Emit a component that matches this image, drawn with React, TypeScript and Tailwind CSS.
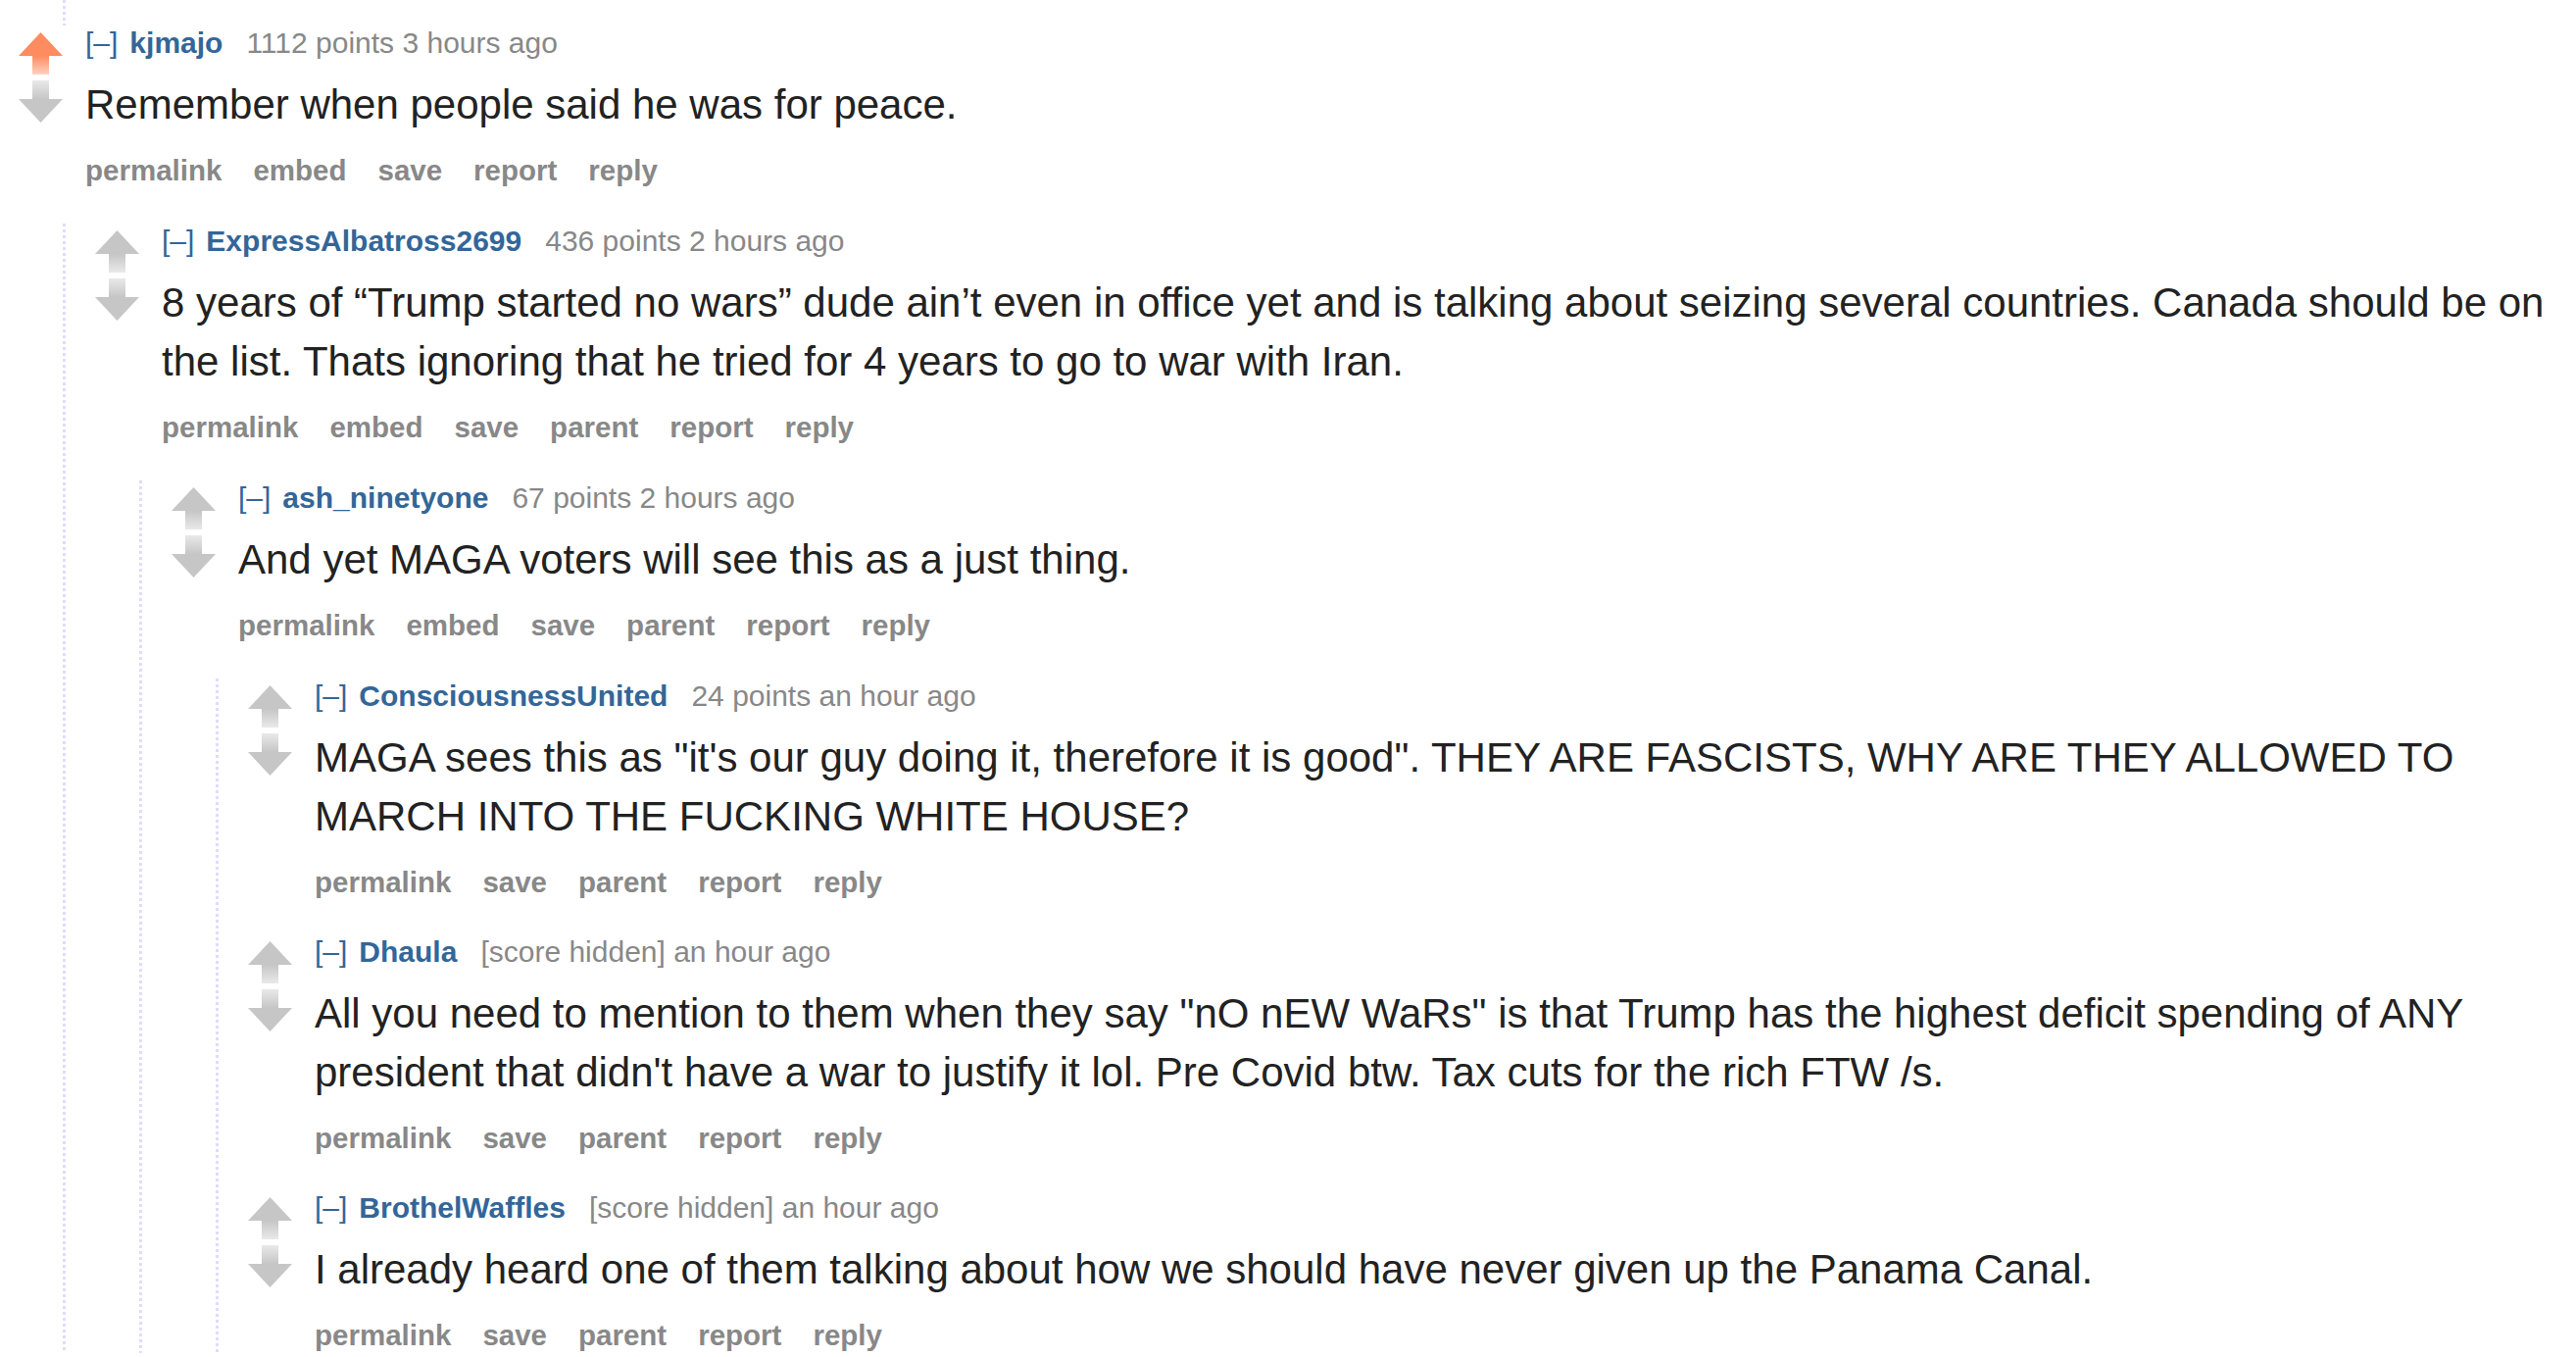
import React from 'react';

interface Comment {
  id: string;
  author: string;
  score: string;
  time: string;
  body: string;
  upvoted?: boolean;
  buttons: string[];
  children?: Comment[];
}

const full = ['permalink', 'embed', 'save', 'parent', 'report', 'reply'];
const short = ['permalink', 'save', 'parent', 'report', 'reply'];

const thread: Comment = {
  id: 'c1',
  author: 'kjmajo',
  score: '1112 points',
  time: '3 hours ago',
  body: 'Remember when people said he was for peace.',
  upvoted: true,
  buttons: ['permalink', 'embed', 'save', 'report', 'reply'],
  children: [
    {
      id: 'c2',
      author: 'ExpressAlbatross2699',
      score: '436 points',
      time: '2 hours ago',
      body: '8 years of \u201cTrump started no wars\u201d dude ain\u2019t even in office yet and is talking about seizing several countries. Canada should be on the list. Thats ignoring that he tried for 4 years to go to war with Iran.',
      buttons: full,
      children: [
        {
          id: 'c3',
          author: 'ash_ninetyone',
          score: '67 points',
          time: '2 hours ago',
          body: 'And yet MAGA voters will see this as a just thing.',
          buttons: full,
          children: [
            {
              id: 'c4',
              author: 'ConsciousnessUnited',
              score: '24 points',
              time: 'an hour ago',
              body: 'MAGA sees this as "it\'s our guy doing it, therefore it is good". THEY ARE FASCISTS, WHY ARE THEY ALLOWED TO MARCH INTO THE FUCKING WHITE HOUSE?',
              buttons: short,
            },
            {
              id: 'c5',
              author: 'Dhaula',
              score: '[score hidden]',
              time: 'an hour ago',
              body: 'All you need to mention to them when they say "nO nEW WaRs" is that Trump has the highest deficit spending of ANY president that didn\'t have a war to justify it lol. Pre Covid btw. Tax cuts for the rich FTW /s.',
              buttons: short,
            },
            {
              id: 'c6',
              author: 'BrothelWaffles',
              score: '[score hidden]',
              time: 'an hour ago',
              body: 'I already heard one of them talking about how we should have never given up the Panama Canal.',
              buttons: short,
            },
          ],
        },
      ],
    },
  ],
};

function Arrow({ dir, active, id }: { dir: 'up' | 'down'; active?: boolean; id: string }) {
  const color = active ? '#ff8b60' : '#c6c6c6';
  const light = active ? '#ffd2c0' : '#e9e9e9';
  const gid = `g-${id}-${dir}`;
  return (
    <svg width="45" height="43" viewBox="0 0 45 43" className="block">
      <defs>
        <linearGradient id={gid} x1="0" y1="0" x2="0" y2="1">
          <stop offset="0" stopColor={dir === 'up' ? color : light} />
          <stop offset="1" stopColor={dir === 'up' ? light : color} />
        </linearGradient>
      </defs>
      {dir === 'up' ? (
        <>
          <polygon points="22.5,0 45,24 0,24" fill={color} />
          <rect x="14" y="24" width="17" height="19" fill={`url(#${gid})`} />
        </>
      ) : (
        <>
          <rect x="14" y="0" width="17" height="19" fill={`url(#${gid})`} />
          <polygon points="0,19 45,19 22.5,43" fill={color} />
        </>
      )}
    </svg>
  );
}

function DottedLine({ className = '' }: { className?: string }) {
  return (
    <div
      className={`w-[3px] shrink-0 bg-[linear-gradient(to_bottom,#ddf_50%,transparent_50%)] bg-[length:3px_6px] bg-repeat-y ${className}`}
    />
  );
}

function CommentBlock({ c }: { c: Comment }) {
  return (
    <div className="flex flex-col">
      <div className="flex">
        <div className="flex w-[45px] shrink-0 flex-col gap-[6px] pt-[7px]">
          <Arrow dir="up" active={c.upvoted} id={c.id} />
          <Arrow dir="down" id={c.id} />
        </div>
        <div className="ml-[23px] flex-1">
          <p className="text-[30px] leading-[36px] whitespace-nowrap">
            <span className="text-[#369]">[–]</span>
            <span className="ml-[12px] font-bold text-[#369]">{c.author}</span>
            <span className="ml-[24px] text-[#888]">{c.score} {c.time}</span>
          </p>
          <p className="mt-[15px] text-[42px] leading-[60px] text-[#222]">{c.body}</p>
          <ul className="mt-[19px] flex gap-[32px] text-[29.5px] leading-[36px] font-bold text-[#888]">
            {c.buttons.map((b) => (
              <li key={b}>{b}</li>
            ))}
          </ul>
        </div>
      </div>
      {c.children && (
        <div className="ml-[45px] mt-[36px] flex">
          <DottedLine />
          <div className="flex flex-1 flex-col gap-[35px] pl-[30px]">
            {c.children.map((ch) => (
              <CommentBlock key={ch.id} c={ch} />
            ))}
          </div>
        </div>
      )}
    </div>
  );
}

export default function App() {
  return (
    <div className="h-[1384px] w-[2628px] overflow-hidden bg-white pl-[19px] pr-[18px] font-['Liberation_Sans',Arial,sans-serif]">
      <DottedLine className="ml-[45px] h-[26px]" />
      <CommentBlock c={thread} />
    </div>
  );
}
